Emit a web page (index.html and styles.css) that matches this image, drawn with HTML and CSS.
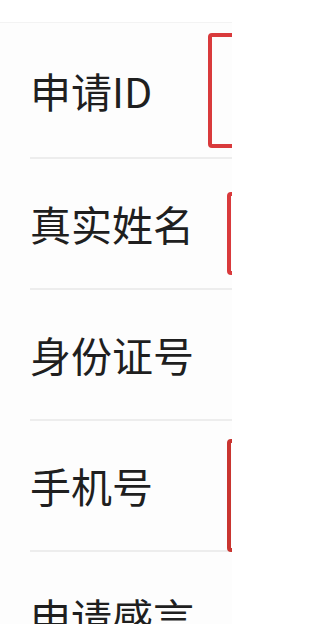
FILE: index.html
```html
<!DOCTYPE html>
<html lang="zh-CN">
<head>
<meta charset="utf-8">
<title>申请表</title>
<link rel="stylesheet" href="styles.css">
</head>
<body>
<div class="page">
  <form class="panel">
    <div class="row row-first">
      <label class="label">申请ID</label>
      <div class="field field-id"></div>
    </div>
    <div class="row">
      <label class="label">真实姓名</label>
      <div class="field field-name"></div>
    </div>
    <div class="row">
      <label class="label">身份证号</label>
    </div>
    <div class="row">
      <label class="label">手机号</label>
      <div class="field field-phone"></div>
    </div>
    <div class="row">
      <label class="label">申请感言</label>
    </div>
  </form>
</div>
</body>
</html>
```

FILE: styles.css
```css
html, body {
  margin: 0;
  padding: 0;
  background: #ffffff;
}

.page {
  width: 280px;
  height: 624px;
  overflow: hidden;
  padding-top: 22px;
  box-sizing: border-box;
}

.panel {
  width: 232px;
  background: #fdfdfd;
  border-top: 1px solid #f3f3f3;
  overflow: hidden;
  display: flex;
  flex-direction: column;
  margin: 0;
}

.row {
  display: flex;
  align-items: center;
  height: 129px;
  margin-left: 30px;
  border-bottom: 2px solid #ededed;
  box-sizing: content-box;
  flex: none;
}

.row-first {
  height: 134px;
}

.label {
  font-family: "Noto Sans CJK SC", "Noto Sans", sans-serif;
  font-size: 41px;
  line-height: 1;
  color: #1f1f1f;
  white-space: nowrap;
  flex: none;
}

.field {
  flex: none;
  width: 80px;
  border: 4px solid #d93a3c;
  border-radius: 4px;
  box-sizing: border-box;
  margin-left: auto;
  margin-right: -75px;
}

.field-id {
  align-self: flex-start;
  margin-top: 10px;
  height: 115px;
  margin-right: -56px;
}

.field-name {
  align-self: flex-start;
  margin-top: 33px;
  height: 83px;
}

.field-phone {
  align-self: flex-end;
  margin-top: 17px;
  height: 113px;
  margin-bottom: -2px;
  border-color: #c93530;
}
```
